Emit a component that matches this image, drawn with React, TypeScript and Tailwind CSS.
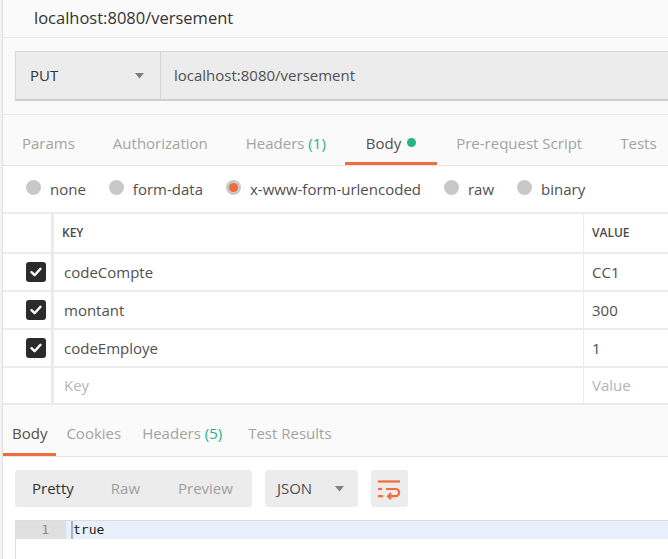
import { useState } from "react";

const requestTabs = [
  { label: "Params" },
  { label: "Authorization" },
  { label: "Headers", count: 1 },
  { label: "Body", dot: true, active: true },
  { label: "Pre-request Script" },
  { label: "Tests" },
];

const bodyModes = ["none", "form-data", "x-www-form-urlencoded", "raw", "binary"];

const rows = [
  { key: "codeCompte", value: "CC1" },
  { key: "montant", value: "300" },
  { key: "codeEmploye", value: "1" },
];

function Caret() {
  return (
    <svg width="9" height="6" viewBox="0 0 9 6" className="flex-none">
      <path d="M0 0 H9 L4.5 5.5 Z" fill="#808080" />
    </svg>
  );
}

function Radio({ checked }: { checked: boolean }) {
  return (
    <span className="mb-[5px] flex h-[15px] w-[15px] flex-none items-center justify-center rounded-full bg-[#c8c8c8]">
      {checked && <span className="h-[9px] w-[9px] rounded-full bg-[#f26b3a]" />}
    </span>
  );
}

function Checkbox() {
  return (
    <span className="flex h-[20px] w-[20px] items-center justify-center rounded-[3px] bg-[#2b2b2b]">
      <svg width="14" height="14" viewBox="0 0 14 14">
        <path
          d="M2.5 7.2 L5.6 10.2 L11.5 3.8"
          fill="none"
          stroke="white"
          strokeWidth="2.4"
          strokeLinecap="round"
          strokeLinejoin="round"
        />
      </svg>
    </span>
  );
}

function WrapIcon() {
  return (
    <svg width="26" height="24" viewBox="0 0 26 24">
      <g stroke="#f26b3a" strokeWidth="2.2" fill="none" strokeLinecap="butt">
        <path d="M2 4.5 H24" />
        <path d="M2 12 H6" />
        <path d="M10 12 H19.5 A3.6 3.6 0 0 1 19.5 19.2 H12" />
        <path d="M15 16.2 L12 19.2 L15 22.2" />
        <path d="M2 19.2 H7" />
      </g>
    </svg>
  );
}

function App() {
  const [mode, setMode] = useState("x-www-form-urlencoded");

  return (
    <div
      className="h-[559px] w-[668px] overflow-hidden bg-[#f3f3f3] pl-[2px] text-[#505050]"
      style={{ fontFamily: '"Open Sans", "Noto Sans", sans-serif' }}
    >
      <div className="flex h-full flex-col border-l border-[#e0e0e0] bg-[#fafafa]">
        {/* request name */}
        <div className="flex h-[38px] flex-none items-center border-b border-[#ebebeb] pl-[31px] text-[16.5px] text-[#333]">
          localhost:8080/versement
        </div>

        {/* url bar */}
        <div className="flex-none border-b border-[#ebebeb] pb-[13px] pl-[12px] pt-[13px]">
          <div className="flex h-[50px] border border-r-0 border-[#d9d9d9] border-b-[#cfcfcf] border-b-[2px] bg-[#ececec]">
            <div className="flex w-[145px] flex-none items-center justify-between border-r border-[#d6d6d6] pl-[14px] pr-[16px] text-[15px] text-[#333]">
              <span>PUT</span>
              <Caret />
            </div>
            <div className="flex items-center pl-[13px] text-[15px] text-[#505050]">
              localhost:8080/versement
            </div>
          </div>
        </div>

        {/* request tabs */}
        <div className="flex h-[51px] flex-none items-stretch border-b border-[#e6e6e6] whitespace-nowrap">
          {requestTabs.map((t) => (
            <div
              key={t.label}
              className={
                "flex items-center gap-[6px] pt-[10px] text-[15px] " +
                (t.active
                  ? "border-b-[3px] border-[#f26b3a] px-[21px] text-[#505050]"
                  : "border-b-[3px] border-transparent px-[19px] text-[#a3a3a3]")
              }
            >
              <span>
                {t.label}
                {t.count !== undefined && (
                  <span className="text-[#26b47f]"> ({t.count})</span>
                )}
              </span>
              {t.dot && <span className="mb-[2px] h-[9px] w-[9px] rounded-full bg-[#26b47f]" />}
            </div>
          ))}
        </div>

        {/* body mode */}
        <div className="flex h-[48px] flex-none items-center gap-[23px] border-b-[2px] border-[#ebebeb] bg-white pl-[23px] pt-[1px] text-[15px] text-[#505050]">
          {bodyModes.map((m) => (
            <label
              key={m}
              className="flex cursor-pointer items-center gap-[9px]"
              onClick={() => setMode(m)}
            >
              <Radio checked={mode === m} />
              <span>{m}</span>
            </label>
          ))}
        </div>

        {/* key / value table */}
        <div className="flex-none bg-white">
          <div className="grid h-[40px] grid-cols-[51px_1fr_84px] border-b-[2px] border-[#ebebeb]">
            <div className="border-r-[3px] border-[#ebebeb]" />
            <div className="flex items-center border-r border-[#ebebeb] pl-[8px] text-[12px] font-semibold text-[#4a4a4a]">
              KEY
            </div>
            <div className="flex items-center pl-[8px] text-[12px] font-semibold text-[#4a4a4a]">
              VALUE
            </div>
          </div>
          {rows.map((r) => (
            <div
              key={r.key}
              className="grid h-[38px] grid-cols-[51px_1fr_84px] border-b-[2px] border-[#ebebeb] text-[15px]"
            >
              <div className="flex items-center justify-end border-r-[3px] border-[#ebebeb] pr-[5px]">
                <Checkbox />
              </div>
              <div className="flex items-center border-r border-[#ebebeb] pl-[10px]">{r.key}</div>
              <div className="flex items-center pl-[8px]">{r.value}</div>
            </div>
          ))}
          <div className="grid h-[37px] grid-cols-[51px_1fr_84px] border-b-[2px] border-[#ebebeb] text-[15px] text-[#b5b5b5]">
            <div className="border-r-[3px] border-[#ebebeb]" />
            <div className="flex items-center border-r border-[#ebebeb] pl-[10px]">Key</div>
            <div className="flex items-center pl-[8px]">Value</div>
          </div>
        </div>

        {/* response tabs */}
        <div className="flex h-[52px] flex-none items-stretch border-b border-[#e6e6e6] text-[15px] whitespace-nowrap">
          <div className="flex items-center border-b-[3px] border-[#f26b3a] px-[9px] pt-[9px] text-[#505050]">
            Body
          </div>
          <div className="flex items-center border-b-[3px] border-transparent px-[10px] pt-[9px] text-[#a3a3a3]">
            Cookies
          </div>
          <div className="flex items-center border-b-[3px] border-transparent px-[11px] pt-[9px] text-[#a3a3a3]">
            <span>
              Headers <span className="text-[#26b47f]">(5)</span>
            </span>
          </div>
          <div className="flex items-center border-b-[3px] border-transparent px-[15px] pt-[9px] text-[#a3a3a3]">
            Test Results
          </div>
        </div>

        {/* response */}
        <div className="flex flex-1 flex-col bg-white">
          <div className="flex items-center gap-[13px] pb-[13px] pl-[12px] pt-[13px] text-[15px]">
            <div className="flex h-[37px] items-center rounded-[3px] bg-[#ececec]">
              <span className="pl-[17px] pr-[18px] text-[#333]">Pretty</span>
              <span className="px-[19px] text-[#a0a0a0]">Raw</span>
              <span className="px-[19px] text-[#a0a0a0]">Preview</span>
            </div>
            <div className="flex h-[37px] w-[93px] items-center justify-between rounded-[3px] bg-[#ececec] pl-[12px] pr-[14px] text-[#505050]">
              <span>JSON</span>
              <Caret />
            </div>
            <div className="flex h-[37px] w-[37px] items-center justify-center rounded-[3px] bg-[#ececec]">
              <WrapIcon />
            </div>
          </div>
          <div className="ml-[12px] flex-1 border-l border-t border-[#dcdcdc]">
            <div className="flex h-[18px] items-center bg-[#e8f1fb] text-[13px]">
              <div
                className="flex h-full w-[50px] flex-none items-center justify-end bg-[#e0e0e0] pr-[17px] text-[#8a8a8a]"
                style={{ fontFamily: '"DejaVu Sans Mono", monospace' }}
              >
                1
              </div>
              <span className="ml-[5px] h-full w-[2px] bg-[#a9b4c0]" />
              <span
                className="text-[#222]"
                style={{ fontFamily: '"DejaVu Sans Mono", monospace' }}
              >
                true
              </span>
            </div>
          </div>
        </div>
      </div>
    </div>
  );
}

export default App;
